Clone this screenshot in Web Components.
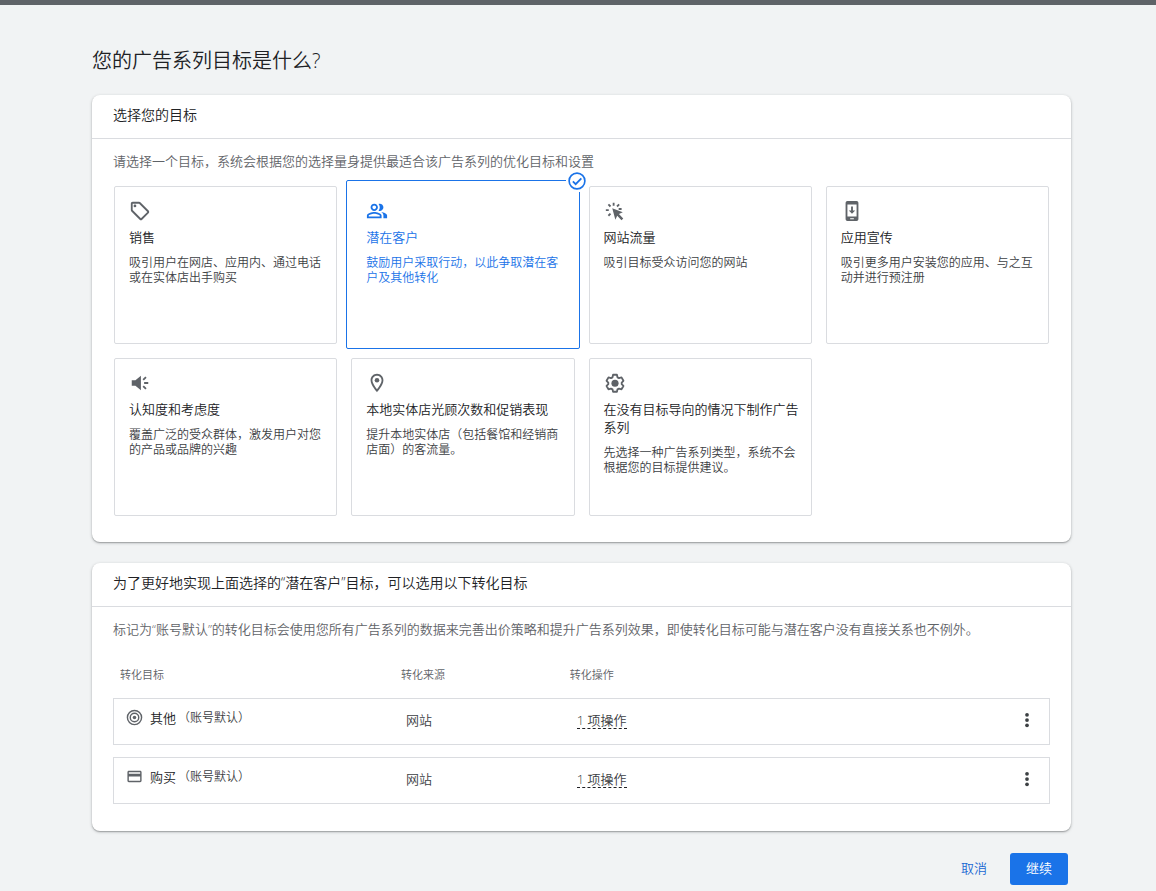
<!DOCTYPE html>
<html lang="zh-CN">
<head>
<meta charset="utf-8">
<title>广告系列目标</title>
<style>
  body {
    margin: 0;
    background: #f1f3f4;
    color: #202124;
    font-family: "Open Sans", "Noto Sans CJK SC", sans-serif;
    font-weight: 350;
  }
</style>
</head>
<body>
<campaign-page></campaign-page>

<script>
const ICONS = {
  tag: '<path d="M21.41 11.58l-9-9C12.05 2.22 11.55 2 11 2H4c-1.1 0-2 .9-2 2v7c0 .55.22 1.05.59 1.42l9 9c.36.36.86.58 1.41.58s1.05-.22 1.41-.59l7-7c.37-.36.59-.86.59-1.41s-.23-1.06-.59-1.42zM13 20.01L4 11V4h7v-.01l9 9-7 7.02z"/><circle cx="6.5" cy="6.5" r="1.5"/>',
  people: '<path d="M16.67 13.13C18.04 14.06 19 15.32 19 17v3h4v-3c0-2.18-3.57-3.47-6.33-3.87zM15 12c2.21 0 4-1.79 4-4s-1.79-4-4-4c-.47 0-.91.1-1.33.24C14.5 5.27 15 6.58 15 8s-.5 2.73-1.33 3.76c.42.14.86.24 1.33.24zM9 12c2.21 0 4-1.79 4-4s-1.79-4-4-4-4 1.79-4 4 1.79 4 4 4zm0-6c1.1 0 2 .9 2 2s-.9 2-2 2-2-.9-2-2 .9-2 2-2zM9 13c-2.67 0-8 1.34-8 4v3h16v-3c0-2.66-5.33-4-8-4zm6 5H3v-.99C3.2 16.29 6.3 15 9 15s5.8 1.29 6 2v1z"/>',
  click: '<path d="M9 9l11.5 4.3-4.2 2.1 4.7 4.7-1.9 1.9-4.7-4.7-2 4.2z"/><path d="M10.500 3v3.200M4.800 4.800l2.300 2.300M2 11h3.200M4.800 17.200l2.300-2.300M16.500 4.800l-2.300 2.300M16 9.800h3.200" fill="none" stroke="currentColor" stroke-width="2"/>',
  phone: '<path fill-rule="evenodd" d="M7 1h10a2 2 0 0 1 2 2v18a2 2 0 0 1-2 2H7a2 2 0 0 1-2-2V3a2 2 0 0 1 2-2zm0 4v13h10V5zm3 15v1h4v-1z"/><path d="M11 7h2v4.500h2.500L12 15l-3.500-3.500H11z"/>',
  volume: '<path d="M3 9v6h4l6 5V4L7 9z"/><path d="M15.500 8.500l3-3M16.500 12H21M15.500 15.500l3 3" fill="none" stroke="currentColor" stroke-width="2"/>',
  pin: '<path d="M12 2C8.130 2 5 5.130 5 9c0 5.250 7 13 7 13s7-7.750 7-13c0-3.870-3.130-7-7-7zM7 9c0-2.760 2.240-5 5-5s5 2.240 5 5c0 2.880-2.880 7.190-5 9.880C9.920 16.210 7 11.850 7 9z"/><circle cx="12" cy="9" r="2.500"/>',
  gear: '<path d="M9.900 3h4.200l.6 2.800 1.700.9 2.700-.8 2.100 3.700-1.900 1.900v1.800l1.900 1.900-2.100 3.700-2.700-.8-1.700.9-.6 2.500H9.900l-.6-2.500-1.700-.9-2.700.8-2.100-3.700 1.900-1.900v-1.800l-1.900-1.900 2.100-3.700 2.700.8 1.700-.9z" fill="none" stroke="currentColor" stroke-width="2" stroke-linejoin="round"/><circle cx="12" cy="12.300" r="3.900"/>',
  target: '<g fill="none" stroke="currentColor" stroke-width="2"><circle cx="12" cy="12" r="10"/><circle cx="12" cy="12" r="6"/></g><circle cx="12" cy="12" r="2.500"/>',
  card: '<path d="M20 4H4c-1.110 0-1.990.890-1.990 2L2 18c0 1.110.890 2 2 2h16c1.110 0 2-.890 2-2V6c0-1.110-.890-2-2-2zm0 14H4v-6h16v6zm0-10H4V6h16v2z"/>',
  more: '<circle cx="12" cy="5" r="2.500"/><circle cx="12" cy="12" r="2.500"/><circle cx="12" cy="19" r="2.500"/>',
  check: '<circle cx="12" cy="12" r="10.500" fill="none" stroke="currentColor" stroke-width="2.200"/><path d="M6.500 12.500l3.700 3.700 7.600-7.700" fill="none" stroke="currentColor" stroke-width="2.400"/>'
};

const define = (name, html, extra = {}) => {
  const template = document.createElement('template');
  template.innerHTML = html;
  customElements.define(name, class extends HTMLElement {
    constructor() {
      super();
      this.attachShadow({ mode: 'open' }).append(template.content.cloneNode(true));
    }
    connectedCallback() { extra.connected?.call(this); }
  });
};

define('ui-icon', `
  <style>
    :host { display: block; flex: none; width: var(--icon-size, 22px); height: var(--icon-size, 22px); }
    svg { display: block; width: 100%; height: 100%; fill: currentColor; }
  </style>
  <svg viewBox="0 0 24 24" aria-hidden="true"></svg>
`, { connected() {
  const name = this.getAttribute('name');
  if (name) this.shadowRoot.querySelector('svg').innerHTML = ICONS[name];
} });

define('ui-panel', `
  <style>
    :host { display: block; background: #fff; border-radius: 8px; box-shadow: 0 1px 3px rgba(60,64,67,.35), 0 1px 1px rgba(60,64,67,.25); }
    header { box-sizing: border-box; min-height: 44px; padding: 10px 21px 13px; border-bottom: 1px solid #dadce0; }
    h2 { margin: 0; font-size: 14px; line-height: 20px; font-weight: inherit; }
    .body { padding: 12px 21px 15px; }
    .hint { font-size: 13px; line-height: 20px; color: #5f6368; }
  </style>
  <section>
    <header><h2><slot name="title"></slot></h2></header>
    <div class="body"><div class="hint"><slot name="hint"></slot></div><slot></slot></div>
  </section>
`);

define('goal-card', `
  <style>
    :host { display: flex; position: relative; min-height: 158px; }
    button {
      flex: 1; display: flex; flex-direction: column; align-items: flex-start;
      margin: 0; padding: 13px 10px 13px 14px; text-align: left; font: inherit; color: #3c4043;
      background: #fff; border: 1px solid #dadce0; border-radius: 2px; cursor: pointer;
    }
    ui-icon { color: #5f6368; }
    .title { margin-top: 6px; font-size: 13px; line-height: 18px; color: #202124; }
    .text { margin-top: 9px; font-size: 12px; line-height: 15px; }
    .badge { display: none; position: absolute; top: -10px; right: -8px; padding: 2px; background: #fff; color: #1a73e8; --icon-size: 18px; }
    .badge ui-icon { color: inherit; }
    :host([selected]) { margin: -6px -5px -5px; }
    :host([selected]) button { padding: 19px 15px 18px 19px; border-color: #1a73e8; }
    :host([selected]) :is(button, ui-icon, .title) { color: #1a73e8; }
    :host([selected]) .badge { display: block; }
  </style>
  <button type="button">
    <ui-icon class="main"></ui-icon>
    <span class="title"><slot name="title"></slot></span>
    <span class="text"><slot></slot></span>
  </button>
  <span class="badge"><ui-icon name="check"></ui-icon></span>
`, { connected() {
  const icon = this.shadowRoot.querySelector('.main');
  icon.setAttribute('name', this.getAttribute('icon'));
  icon.connectedCallback();
  const button = this.shadowRoot.querySelector('button');
  button.setAttribute('aria-pressed', this.hasAttribute('selected'));
  button.onclick = () => {
    for (const card of this.parentElement.querySelectorAll('goal-card')) {
      card.toggleAttribute('selected', card === this);
      card.shadowRoot.querySelector('button').setAttribute('aria-pressed', card === this);
    }
  };
} });

define('goal-grid', `
  <style>
    :host { display: grid; grid-template-columns: repeat(4, minmax(0, 1fr)); gap: 14px; margin: 15px 1px 11px; }
  </style>
  <slot></slot>
`);

const goalRow = (icon, name) => `
  <tr>
    <td><div class="goal"><ui-icon name="${icon}"></ui-icon><span class="name">${name}</span><span class="note">（账号默认）</span></div></td>
    <td>网站</td>
    <td><a href="#actions">1 项操作</a></td>
    <td><button type="button" aria-label="更多"><ui-icon name="more"></ui-icon></button></td>
  </tr>`;

define('conversion-table', `
  <style>
    :host { display: block; margin-top: 13px; }
    table { width: 100%; table-layout: fixed; border-collapse: separate; border-spacing: 0 12px; }
    th { height: 22px; padding: 0 7px; font-size: 11px; line-height: 22px; font-weight: inherit; text-align: left; color: #5f6368; }
    td { box-sizing: border-box; height: 47px; padding: 0 12px 4px; font-size: 13px; line-height: 18px; color: #3c4043; border: solid #dadce0; border-width: 1px 0; }
    td:first-child { border-left-width: 1px; }
    td:last-child { border-right-width: 1px; padding: 0 10px 4px; }
    td:nth-child(3) { padding-left: 14px; }
    .c1 { width: 30%; } .c2 { width: 18%; } .c4 { width: 48px; }
    .goal { display: flex; align-items: center; padding-bottom: 4px; --icon-size: 17px; }
    .goal ui-icon { color: #5f6368; }
    .name { margin: 0 2px 0 7px; color: #202124; }
    .note { font-size: 12px; }
    a { display: inline-block; line-height: 16px; color: inherit; text-decoration: none; border-bottom: 1px dashed #202124; }
    button { display: flex; justify-content: center; margin-left: auto; width: 24px; padding: 3px 0; border: 0; background: none; color: #3c4043; --icon-size: 18px; cursor: pointer; }
  </style>
  <table>
    <colgroup><col class="c1"><col class="c2"><col><col class="c4"></colgroup>
    <thead><tr><th>转化目标</th><th>转化来源</th><th>转化操作</th><th></th></tr></thead>
    <tbody>${goalRow('target', '其他')}${goalRow('card', '购买')}</tbody>
  </table>
`);

define('ui-button', `
  <style>
    :host { display: block; }
    button { height: 32px; padding: 0 16px 3px; border: 0; border-radius: 3px; background: none; color: #1967d2; font: inherit; font-size: 13px; cursor: pointer; }
    :host([primary]) button { background: #1a73e8; color: #fff; }
  </style>
  <button type="button"><slot></slot></button>
`);

define('campaign-page', `
  <style>
    :host { display: block; border-top: 5px solid #5f6368; }
    main { padding: 42px 85px 6px 92px; }
    h1 { margin: 0 0 20px; font-size: 20px; line-height: 28px; font-weight: inherit; }
    ui-panel + ui-panel { margin-top: 21px; }
    footer { display: flex; justify-content: flex-end; gap: 7px; margin: 22px 3px 0 0; }
  </style>
  <main>
    <h1>您的广告系列目标是什么?</h1>
    <ui-panel>
      <span slot="title">选择您的目标</span>
      <span slot="hint">请选择一个目标，系统会根据您的选择量身提供最适合该广告系列的优化目标和设置</span>
      <goal-grid>
        <goal-card icon="tag"><span slot="title">销售</span>吸引用户在网店、应用内、通过电话或在实体店出手购买</goal-card>
        <goal-card icon="people" selected><span slot="title">潜在客户</span>鼓励用户采取行动，以此争取潜在客户及其他转化</goal-card>
        <goal-card icon="click"><span slot="title">网站流量</span>吸引目标受众访问您的网站</goal-card>
        <goal-card icon="phone"><span slot="title">应用宣传</span>吸引更多用户安装您的应用、与之互动并进行预注册</goal-card>
        <goal-card icon="volume"><span slot="title">认知度和考虑度</span>覆盖广泛的受众群体，激发用户对您的产品或品牌的兴趣</goal-card>
        <goal-card icon="pin"><span slot="title">本地实体店光顾次数和促销表现</span>提升本地实体店（包括餐馆和经销商店面）的客流量。</goal-card>
        <goal-card icon="gear"><span slot="title">在没有目标导向的情况下制作广告系列</span>先选择一种广告系列类型，系统不会根据您的目标提供建议。</goal-card>
      </goal-grid>
    </ui-panel>
    <ui-panel>
      <span slot="title">为了更好地实现上面选择的“潜在客户”目标，可以选用以下转化目标</span>
      <span slot="hint">标记为“账号默认”的转化目标会使用您所有广告系列的数据来完善出价策略和提升广告系列效果，即使转化目标可能与潜在客户没有直接关系也不例外。</span>
      <conversion-table></conversion-table>
    </ui-panel>
    <footer>
      <ui-button>取消</ui-button>
      <ui-button primary>继续</ui-button>
    </footer>
  </main>
`);
</script>
</body>
</html>
